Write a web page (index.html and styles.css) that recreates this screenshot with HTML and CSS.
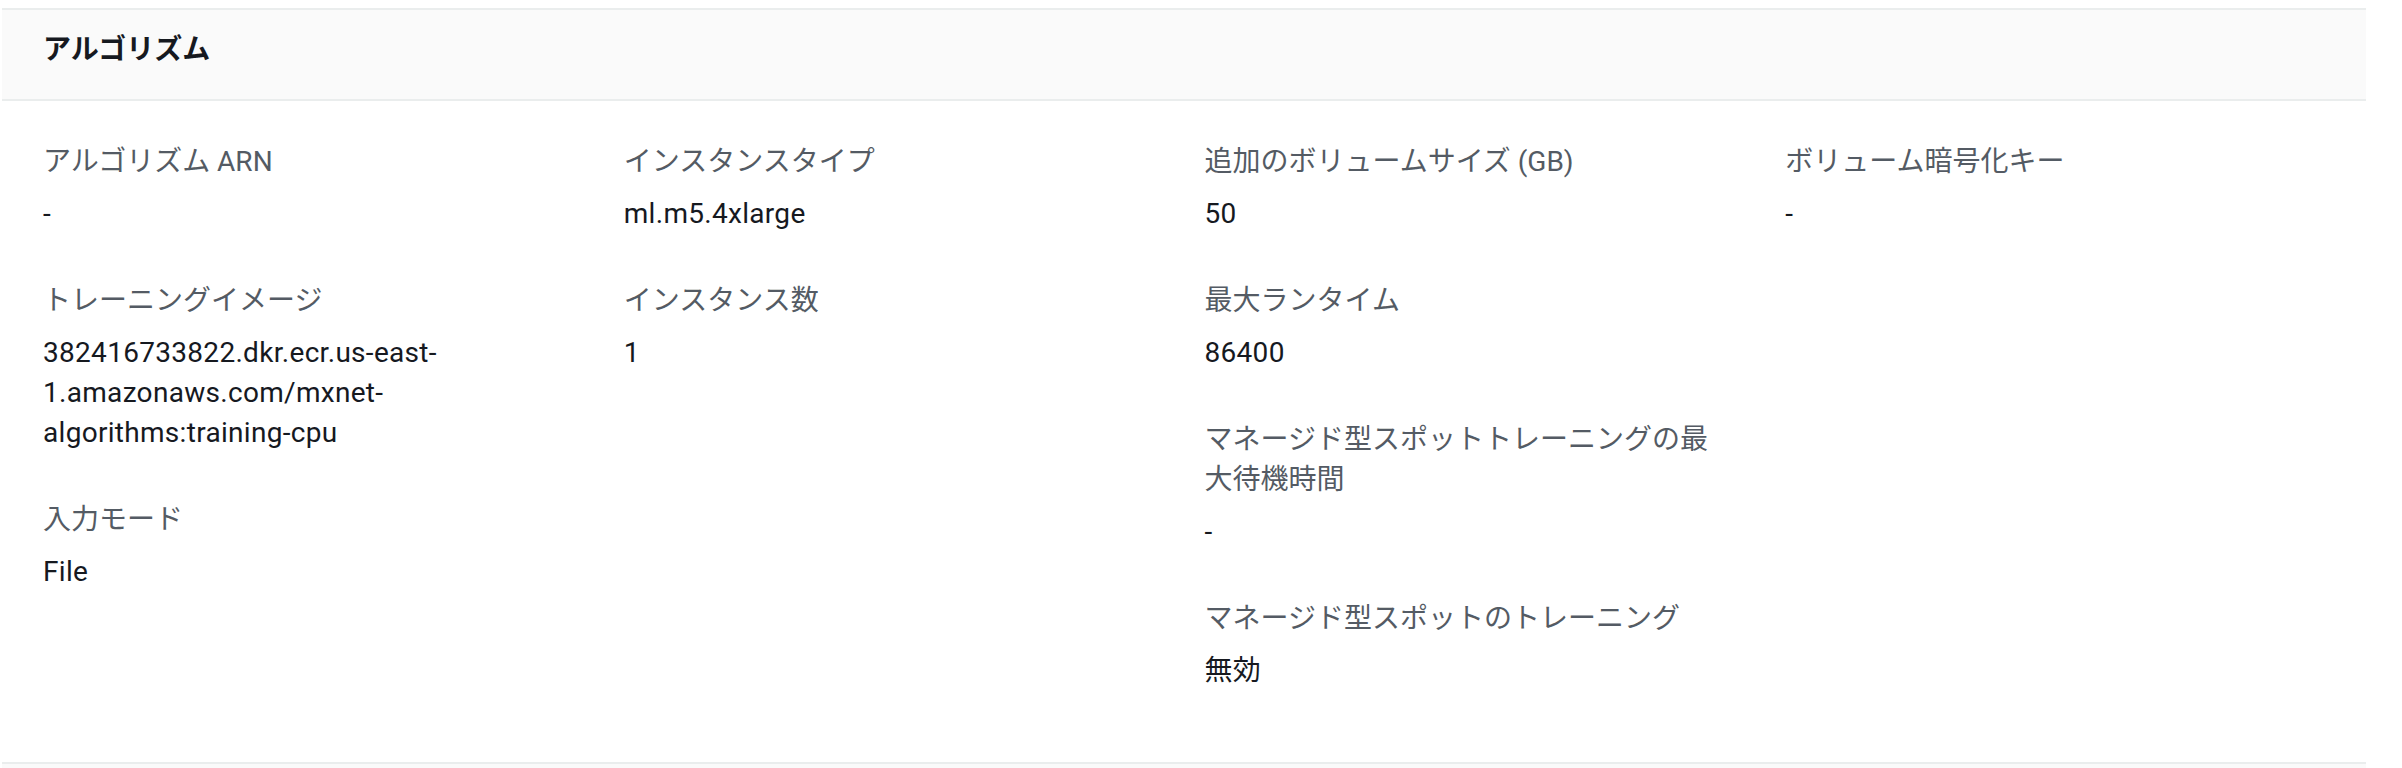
FILE: index.html
```html
<!DOCTYPE html>
<html lang="ja">
<head>
<meta charset="utf-8">
<title>アルゴリズム</title>
<link rel="stylesheet" href="styles.css">
</head>
<body>
<section class="panel">
  <div class="panel-header"><h2 class="panel-title">アルゴリズム</h2></div>
  <div class="panel-body">
    <div class="col">
      <div class="pair"><div class="label">アルゴリズム ARN</div><div class="value">-</div></div>
      <div class="pair"><div class="label">トレーニングイメージ</div><div class="value">382416733822.dkr.ecr.us-east-1.amazonaws.com/mxnet-algorithms:training-cpu</div></div>
      <div class="pair"><div class="label">入力モード</div><div class="value">File</div></div>
    </div>
    <div class="col">
      <div class="pair"><div class="label">インスタンスタイプ</div><div class="value">ml.m5.4xlarge</div></div>
      <div class="pair"><div class="label">インスタンス数</div><div class="value">1</div></div>
    </div>
    <div class="col">
      <div class="pair"><div class="label">追加のボリュームサイズ (GB)</div><div class="value">50</div></div>
      <div class="pair"><div class="label">最大ランタイム</div><div class="value">86400</div></div>
      <div class="pair"><div class="label">マネージド型スポットトレーニングの最大待機時間</div><div class="value">-</div></div>
      <div class="pair"><div class="label">マネージド型スポットのトレーニング</div><div class="value">無効</div></div>
    </div>
    <div class="col">
      <div class="pair"><div class="label">ボリューム暗号化キー</div><div class="value">-</div></div>
    </div>
  </div>
</section>
<section class="panel">
  <div class="panel-header panel-header-empty"></div>
</section>
</body>
</html>
```
FILE: styles.css
```css
html, body {
  margin: 0;
  padding: 0;
  background: #ffffff;
}
body {
  font-family: Roboto, "Noto Sans CJK JP", sans-serif;
  font-size: 28px;
  line-height: 40px;
  color: #16191f;
  padding-top: 8px;
}
.panel {
  margin: 0 36px 0 2px;
  border-top: 2px solid #eaeded;
}
.panel-header {
  background: #fafafa;
  border-bottom: 2px solid #eaeded;
  padding: 20px 41px 29px;
}
.panel-header-empty {
  height: 4px;
  padding: 0;
  border-bottom: none;
}
.panel-title {
  margin: 0;
  font-size: 28px;
  line-height: 40px;
  font-weight: 700;
  color: #16191f;
}
.panel-body {
  display: grid;
  grid-template-columns: repeat(4, 1fr);
  padding: 41px 0 24px 41px;
}
.col {
  padding-right: 56px;
  min-width: 0;
}
.pair {
  margin-bottom: 47px;
}
.label {
  color: #545b64;
  margin-bottom: 12px;
}
.value {
  color: #16191f;
  letter-spacing: 0.3px;
}
```
